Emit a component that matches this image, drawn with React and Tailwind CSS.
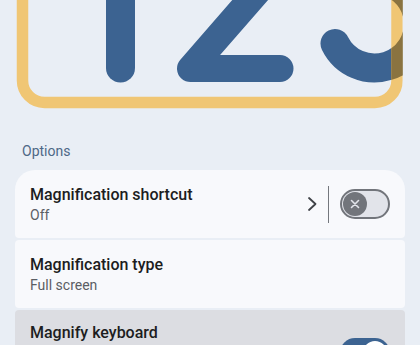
import React from "react";

function Preview() {
  const three = "M 340 -20 L 375 -20 A 44 44 0 1 1 335 43.5";
  return (
    <svg width="420" height="120" viewBox="0 0 420 120" className="block">
      <defs>
        <clipPath id="view">
          <rect x="0" y="-200" width="402.75" height="400" />
        </clipPath>
        <clipPath id="strip">
          <rect x="391.25" y="-200" width="11.5" height="400" />
        </clipPath>
      </defs>
      <g clipPath="url(#view)">
        <g stroke="#3c6391" fill="none" strokeLinecap="round" strokeLinejoin="round">
          <line x1="120.5" y1="-60" x2="120.5" y2="68" strokeWidth="29" />
          <polyline points="285,-40 190.5,68.5 280,68.5" strokeWidth="27" />
          <path d={three} strokeWidth="29" />
        </g>
        <rect
          x="22.5"
          y="-150"
          width="374.5"
          height="252.5"
          rx="22"
          fill="none"
          stroke="#f0c674"
          strokeWidth="11.5"
        />
        <g clipPath="url(#strip)">
          <path d={three} stroke="#8a7340" strokeWidth="29" fill="none" strokeLinecap="round" />
        </g>
      </g>
    </svg>
  );
}

function ToggleOff() {
  return (
    <div className="w-[50px] h-[30px] rounded-full border-2 border-[#72757b] bg-[#e2e4ea] flex items-center pl-px">
      <div className="w-[24px] h-[24px] rounded-full bg-[#72757b] flex items-center justify-center">
        <svg width="12" height="12" viewBox="0 0 12 12">
          <path d="M2.5 2.5 L9.5 9.5 M9.5 2.5 L2.5 9.5" stroke="#e2e4ea" strokeWidth="1.6" strokeLinecap="round" />
        </svg>
      </div>
    </div>
  );
}

function ToggleOn() {
  return (
    <div className="w-[50px] h-[30px] rounded-full bg-[#3c6391] flex items-center justify-end pr-[3px]">
      <div className="w-[24px] h-[24px] rounded-full bg-white flex items-center justify-center">
        <svg width="14" height="14" viewBox="0 0 14 14">
          <path d="M3 7.2 L5.8 10 L11 4.5" stroke="#3c6391" strokeWidth="1.8" fill="none" strokeLinecap="round" strokeLinejoin="round" />
        </svg>
      </div>
    </div>
  );
}

export default function App() {
  return (
    <div
      className="w-[420px] h-[345px] overflow-hidden bg-[#e9eef5]"
      style={{ fontFamily: "Roboto, 'Noto Sans', sans-serif" }}
    >
      <Preview />
      <div className="px-[15px]">
        <div className="mt-[21px] pl-[7px] text-[14px] leading-[20px] text-[#4e6886]">Options</div>
        <div className="mt-[9px] flex flex-col gap-[2px]">
          <div className="bg-[#f8f9fc] rounded-t-[20px] rounded-b-[4px] pl-[15px] pr-[15px] py-[14px] flex items-center">
            <div className="flex-1">
              <div className="text-[16px] leading-[22px] font-medium text-[#1c1d21]">Magnification shortcut</div>
              <div className="text-[14px] leading-[18px] text-[#5b5e64]">Off</div>
            </div>
            <svg width="12" height="18" viewBox="0 0 12 18" className="mr-[10px]">
              <polyline points="3,3 9.5,9 3,15" stroke="#3f4247" strokeWidth="1.8" fill="none" strokeLinecap="round" strokeLinejoin="round" />
            </svg>
            <div className="w-px h-[37px] bg-[#74777d] mr-[11px]" />
            <ToggleOff />
          </div>
          <div className="bg-[#f8f9fc] rounded-[4px] pl-[15px] pr-[15px] py-[14px] flex items-center">
            <div className="flex-1">
              <div className="text-[16px] leading-[22px] font-medium text-[#1c1d21]">Magnification type</div>
              <div className="text-[14px] leading-[18px] text-[#5b5e64]">Full screen</div>
            </div>
          </div>
          <div className="bg-[#dcdde2] rounded-[4px] pl-[15px] pr-[15px] pt-[12px] pb-[12px] flex items-center">
            <div className="flex-1">
              <div className="text-[16px] leading-[22px] font-medium text-[#1c1d21]">Magnify keyboard</div>
              <div className="mt-[4px] text-[14px] leading-[18px] text-[#5b5e64] pr-[20px]">
                Magnifier follows text as you type, so the keyboard stays in view
              </div>
            </div>
            <ToggleOn />
          </div>
        </div>
      </div>
    </div>
  );
}
